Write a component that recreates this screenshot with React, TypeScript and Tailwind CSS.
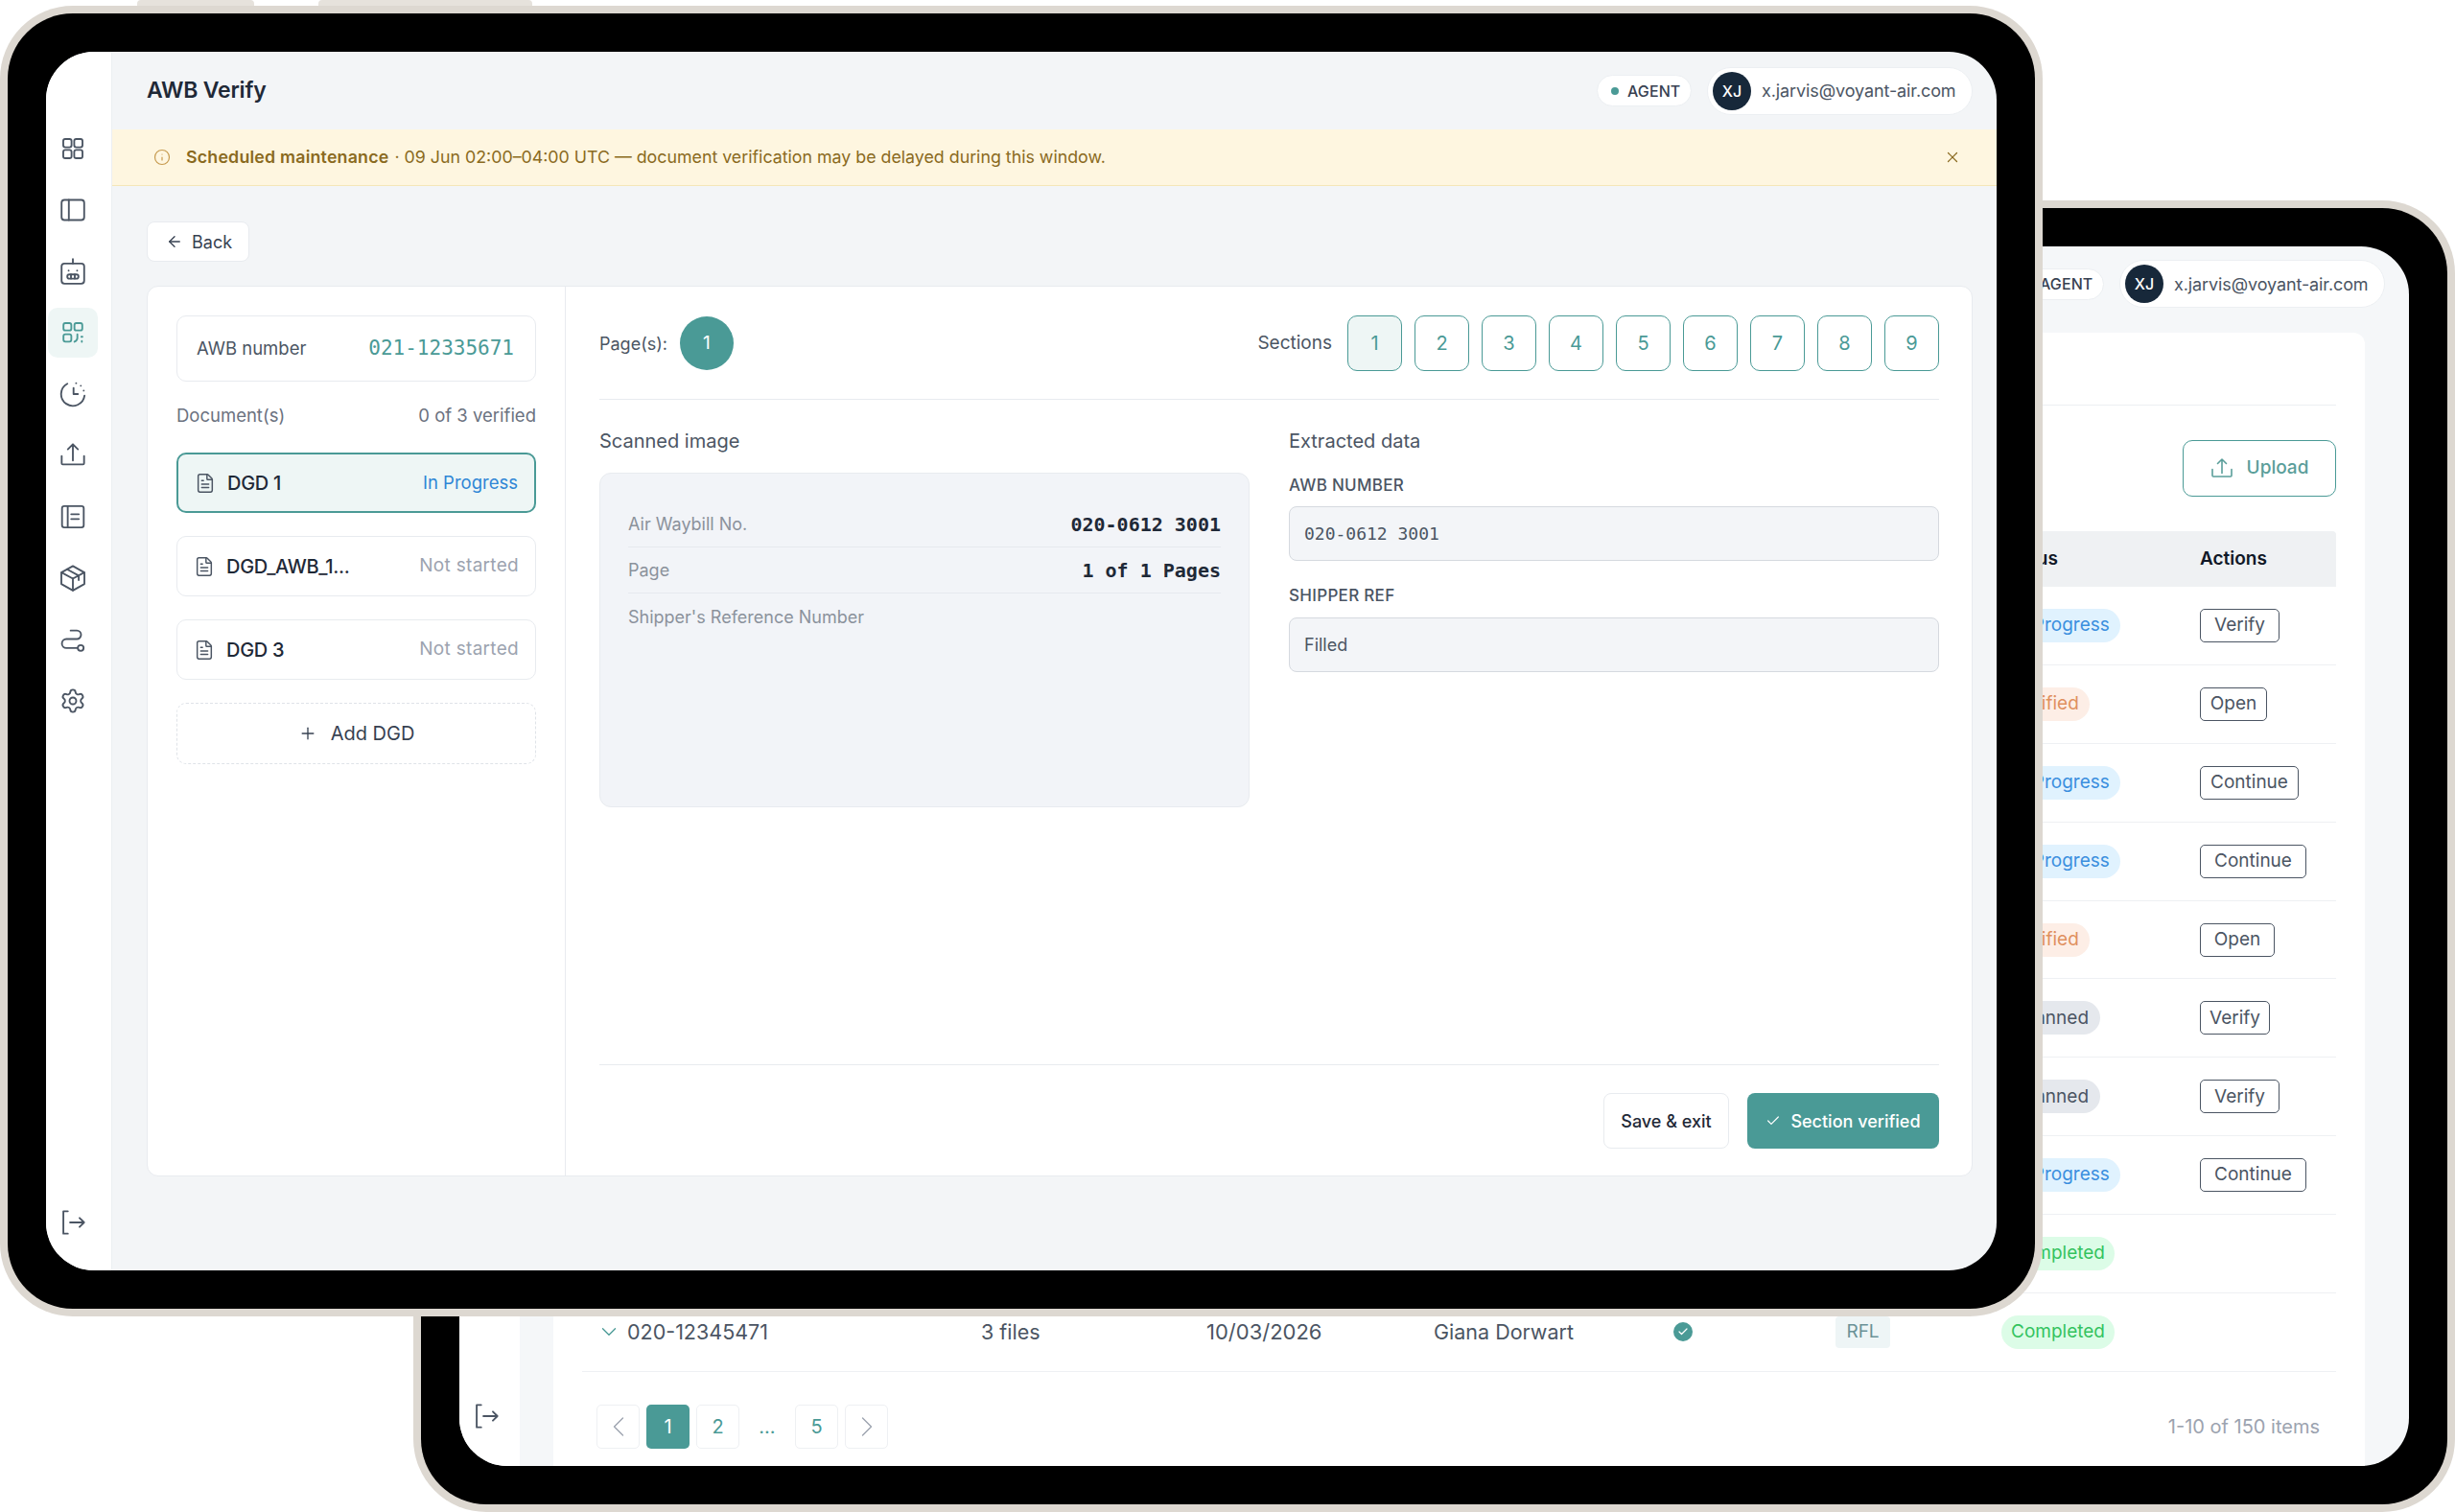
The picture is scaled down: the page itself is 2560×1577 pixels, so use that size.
import type { ReactNode } from 'react'
import { ArrowLeft, Check, ChevronDown, ChevronLeft, ChevronRight, FileText, Info, Plus, Settings, X } from 'lucide-react'

function Glyph({ children, className = 'h-7 w-7' }: { children: ReactNode; className?: string }) {
  return (
    <svg viewBox="0 0 24 24" fill="none" stroke="currentColor" strokeWidth="1.6" strokeLinecap="round" strokeLinejoin="round" className={className}>
      {children}
    </svg>
  )
}

const GridIcon = () => (
  <Glyph>
    <rect x="3.4" y="3.4" width="7.4" height="7.4" rx="1.8" />
    <rect x="13.2" y="3.4" width="7.4" height="7.4" rx="1.8" />
    <rect x="3.4" y="13.2" width="7.4" height="7.4" rx="1.8" />
    <rect x="13.2" y="13.2" width="7.4" height="7.4" rx="1.8" />
  </Glyph>
)
const PanelIcon = () => (
  <Glyph>
    <rect x="1.9" y="3" width="20.2" height="18" rx="2.6" />
    <path d="M8.4 3v18" />
  </Glyph>
)
const BotIcon = () => (
  <Glyph>
    <path d="M12 1v4" />
    <rect x="1.9" y="5" width="20.2" height="18" rx="2.6" />
    <path d="M8.2 11.4h.01M15.8 11.4h.01M10.3 14.8v3.6M13.7 14.8v3.6" />
    <rect x="7" y="14.8" width="10" height="3.7" rx="1.85" />
  </Glyph>
)
const QrIcon = () => (
  <Glyph>
    <rect x="3.6" y="3.4" width="7" height="6.6" rx="1.7" />
    <rect x="13.4" y="3.4" width="7" height="6.6" rx="1.7" />
    <rect x="3.6" y="13.4" width="7" height="6.6" rx="1.7" />
    <path d="M16 13.4v3.4c0 1.6-1 2.7-2.6 3.3M19.6 15.6h.9M20 19.4v.8" />
  </Glyph>
)
const ClockIcon = () => (
  <Glyph>
    <path d="M22.4 13.4A10.5 10.5 0 1 1 7 2.8" />
    <path d="M14.9 2.3h.01M19.1 4.6h.01M21.7 8.9h.01M12.6 6.5V12h3.9" />
  </Glyph>
)
const UploadIcon = ({ className }: { className?: string }) => (
  <Glyph className={className}>
    <path d="M2 12.5V19a1 1 0 0 0 1 1h18a1 1 0 0 0 1-1v-6.500M12 16.500V2M7.500 6.500 12 2l4.500 4.500" />
  </Glyph>
)
const NotebookIcon = () => (
  <Glyph>
    <rect x="2.300" y="2.500" width="19.400" height="19" rx="2" />
    <path d="M7.400 2.500v19M10.500 9.700h6.800M10.500 14h6.800" />
  </Glyph>
)
const BoxIcon = () => (
  <Glyph>
    <path d="M12 1.200 22.300 7v10.200L12 23 1.700 17.200V7z" />
    <path d="M1.900 7 12 12.400 22.100 7M12 12.400V23M6.800 4.100 17.200 9.800v4" />
  </Glyph>
)
const RouteIcon = () => (
  <Glyph>
    <path d="M10 4h5.500a3.800 3.800 0 0 1 0 7.600H6.200a4 4 0 0 0 0 8h10.200" />
    <circle cx="19" cy="19.600" r="2.600" />
  </Glyph>
)
const LogoutIcon = () => (
  <Glyph>
    <path d="M7.500 2H3.500v20h4M9.500 12H22M18 8l4 4-4 4" />
  </Glyph>
)

function Sidebar() {
  const items = [
    <GridIcon key="a" />,
    <PanelIcon key="b" />,
    <BotIcon key="c" />,
    <QrIcon key="d" />,
    <ClockIcon key="e" />,
    <UploadIcon key="f" />,
    <NotebookIcon key="g" />,
    <BoxIcon key="h" />,
    <RouteIcon key="i" />,
    <Settings key="j" className="h-7 w-7" strokeWidth={1.6} />,
  ]
  return (
    <aside className="flex w-[69px] shrink-0 flex-col items-start border-r border-[#eceff2] bg-white pb-[36px] pl-[2px] pt-[75px] text-[#4b5563]">
      {items.map((icon, i) => (
        <div
          key={i}
          className={`mb-[12px] flex h-[52px] w-[52px] items-center justify-center rounded-[10px] ${i === 3 ? 'bg-[#eef6f5] text-[#4a9a96]' : ''}`}
        >
          {icon}
        </div>
      ))}
      <div className="mt-auto pl-[12px]">
        <LogoutIcon />
      </div>
    </aside>
  )
}

function UserPills() {
  return (
    <div className="flex items-center gap-[16px]">
      <div className="flex h-[33px] w-[99px] items-center gap-[9px] rounded-full border border-[#eceff2] bg-white pl-[14px]">
        <span className="h-[8px] w-[8px] rounded-full bg-[#4a9a96]" />
        <span className="text-[16px] font-medium tracking-[0.1px] text-[#374151]">AGENT</span>
      </div>
      <div className="flex h-[50px] w-[277px] items-center gap-[11px] rounded-full border border-[#eceff2] bg-white pl-[5px]">
        <span className="flex h-[40px] w-[40px] items-center justify-center rounded-full bg-[#17283a] text-[16px] font-medium text-white">XJ</span>
        <span className="text-[18px] tracking-[-0.1px] text-[#4b5563]">x.jarvis@voyant-air.com</span>
      </div>
    </div>
  )
}

const docs = [
  { name: 'DGD 1', status: 'In Progress', active: true },
  { name: 'DGD_AWB_1...', status: 'Not started', active: false },
  { name: 'DGD 3', status: 'Not started', active: false },
]

function DocumentPane() {
  return (
    <div className="w-[436px] shrink-0 border-r border-[#e8ebef] p-[30px]">
      <div className="flex h-[69px] items-center justify-between rounded-[10px] border border-[#e8ebef] pl-[20px] pr-[22px]">
        <span className="text-[18.500px] text-[#4b5563]">AWB number</span>
        <span className="font-['DejaVu_Sans_Mono',monospace] text-[21px] text-[#4a9a96]">021-12335671</span>
      </div>
      <div className="mt-[26px] flex h-[20px] items-center justify-between text-[18.500px] text-[#6b7280]">
        <span>Document(s)</span>
        <span>0 of 3 verified</span>
      </div>
      <div className="mt-[28px] flex flex-col gap-[24px]">
        {docs.map((d) => (
          <div
            key={d.name}
            className={`flex h-[63px] items-center rounded-[10px] border pl-[17px] pr-[17px] ${d.active ? 'border-2 border-[#4a9a96] bg-[#eef6f5]' : 'border-[#e8ebef] bg-white'}`}
          >
            <FileText className="h-[22px] w-[22px] text-[#4b5563]" strokeWidth={1.6} />
            <span className="ml-[12px] text-[20px] font-medium tracking-[-0.3px] text-[#1f2937]">{d.name}</span>
            <span className={`ml-auto ${d.active ? 'text-[18.500px] text-[#2f86d6]' : 'text-[19px] tracking-[0.3px] text-[#9ca3af]'}`}>{d.status}</span>
          </div>
        ))}
        <div className="flex h-[64px] items-center justify-center gap-[14px] rounded-[10px] border border-dashed border-[#dfe3e8] text-[20px] text-[#374151]">
          <Plus className="h-[20px] w-[20px]" strokeWidth={1.6} />
          Add DGD
        </div>
      </div>
    </div>
  )
}

function ScanRow({ label, value }: { label: string; value?: string }) {
  return (
    <div className={`flex h-[48px] items-center justify-between ${value ? 'border-b border-[#e6e9ee]' : ''}`}>
      <span className="text-[18px] text-[#8b929c]">{label}</span>
      {value && <span className="font-['DejaVu_Sans_Mono',monospace] text-[20px] font-bold text-[#1f2937]">{value}</span>}
    </div>
  )
}

function VerifyPane() {
  return (
    <div className="flex flex-1 flex-col pb-[28px] pl-[35px] pr-[34px] pt-[30px]">
      <div className="flex items-center justify-between border-b border-[#e8ebef] pb-[29px]">
        <div className="flex items-center gap-[13px]">
          <span className="text-[18px] text-[#4b5563]">Page(s):</span>
          <span className="flex h-[56px] w-[56px] items-center justify-center rounded-full bg-[#4a9a96] text-[19px] text-white">1</span>
        </div>
        <div className="flex items-center gap-[13px]">
          <span className="mr-[3px] text-[19px] text-[#4b5563]">Sections</span>
          {[1, 2, 3, 4, 5, 6, 7, 8, 9].map((n) => (
            <span
              key={n}
              className={`flex h-[58px] w-[57px] items-center justify-center rounded-[10px] border border-[#4a9a96] text-[20px] text-[#4a9a96] ${n === 1 ? 'bg-[#eef6f5]' : ''}`}
            >
              {n}
            </span>
          ))}
        </div>
      </div>
      <div className="mt-[31px] grid grid-cols-2 gap-[41px]">
        <div>
          <h2 className="h-[24px] text-[20px] leading-[24px] text-[#4b5563]">Scanned image</h2>
          <div className="mt-[21px] h-[349px] rounded-[12px] border border-[#e8ebef] bg-[#f2f4f8] px-[29px] pt-[29px]">
            <ScanRow label="Air Waybill No." value="020-0612 3001" />
            <ScanRow label="Page" value="1 of 1 Pages" />
            <ScanRow label="Shipper's Reference Number" />
          </div>
        </div>
        <div>
          <h2 className="h-[24px] text-[20px] leading-[24px] text-[#4b5563]">Extracted data</h2>
          <div className="mt-[24px] h-[20px] text-[17px] font-medium leading-[20px] tracking-[0.3px] text-[#4b5563]">AWB NUMBER</div>
          <div className="mt-[12px] flex h-[57px] items-center rounded-[8px] border border-[#d5d9df] bg-[#f3f5f8] pl-[15px] font-['DejaVu_Sans_Mono',monospace] text-[18px] text-[#4b5563]">
            020-0612 3001
          </div>
          <div className="mt-[26px] h-[20px] text-[17px] font-medium leading-[20px] tracking-[0.3px] text-[#4b5563]">SHIPPER REF</div>
          <div className="mt-[13px] flex h-[57px] items-center rounded-[8px] border border-[#d5d9df] bg-[#f3f5f8] pl-[15px] text-[18px] text-[#4b5563]">
            Filled
          </div>
        </div>
      </div>
      <div className="mt-auto flex justify-end gap-[19px] border-t border-[#e8ebef] pt-[29px]">
        <button className="h-[58px] w-[131px] rounded-[8px] border border-[#e8ebef] bg-white text-[18px] font-medium text-[#1f2937]">Save &amp; exit</button>
        <button className="flex h-[58px] w-[200px] items-center justify-center gap-[10px] rounded-[8px] bg-[#4a9a96] text-[18px] font-medium text-white">
          <Check className="h-[16px] w-[16px]" strokeWidth={1.8} />
          Section verified
        </button>
      </div>
    </div>
  )
}

function FrontApp() {
  return (
    <div className="flex h-full overflow-hidden rounded-[50px] bg-[#f3f5f7]">
      <Sidebar />
      <main className="flex flex-1 flex-col">
        <header className="flex h-[81px] shrink-0 items-center justify-between pl-[36px] pr-[25px]">
          <h1 className="text-[23px] font-semibold tracking-[-0.2px] text-[#1f2937]">AWB Verify</h1>
          <UserPills />
        </header>
        <div className="flex h-[59px] shrink-0 items-center border-b border-[#f5e6b8] bg-[#fef6e0] pl-[43px] pr-[37px] text-[17.800px] text-[#8a6a20]">
          <Info className="h-[18px] w-[18px] text-[#c69a4e]" strokeWidth={1.6} />
          <span className="ml-[16px] font-semibold tracking-[0.2px]">Scheduled maintenance</span>
          <span className="ml-[6px]">· 09 Jun 02:00–04:00 UTC — document verification may be delayed during this window.</span>
          <X className="ml-auto h-[18px] w-[18px]" strokeWidth={1.6} />
        </div>
        <div className="pl-[36px] pr-[25px] pt-[37px]">
          <button className="flex h-[42px] w-[107px] items-center gap-[9px] rounded-[8px] border border-[#e8ebef] bg-white pl-[19px] text-[18px] text-[#374151]">
            <ArrowLeft className="h-[18px] w-[18px]" strokeWidth={1.8} />
            Back
          </button>
          <section className="mt-[25px] flex h-[929px] rounded-[12px] border border-[#e8ebef] bg-white">
            <DocumentPane />
            <VerifyPane />
          </section>
        </div>
      </main>
    </div>
  )
}

const statusStyles = {
  progress: 'w-[124px] bg-[#e0f2fe] text-[#3b8fde]',
  verified: 'w-[92px] bg-[#fdeee6] text-[#e0905f]',
  scanned: 'w-[103px] bg-[#e5e8ed] text-[#4b5563]',
  completed: 'w-[118px] bg-[#dcfce7] text-[#34c35f]',
}
const statusLabel = { progress: 'In Progress', verified: 'Verified', scanned: 'Scanned', completed: 'Completed' }

type Row = { status: keyof typeof statusStyles; action?: string; actionWidth?: string }

const rows: Row[] = [
  { status: 'progress', action: 'Verify', actionWidth: 'w-[83px]' },
  { status: 'verified', action: 'Open', actionWidth: 'w-[70px]' },
  { status: 'progress', action: 'Continue', actionWidth: 'w-[103px]' },
  { status: 'progress', action: 'Continue', actionWidth: 'w-[111px]' },
  { status: 'verified', action: 'Open', actionWidth: 'w-[78px]' },
  { status: 'scanned', action: 'Verify', actionWidth: 'w-[73px]' },
  { status: 'scanned', action: 'Verify', actionWidth: 'w-[83px]' },
  { status: 'progress', action: 'Continue', actionWidth: 'w-[111px]' },
  { status: 'completed' },
  { status: 'completed' },
]

const columns = 'grid grid-cols-[396px_235px_237px_249px_170px_173px_207px_1fr] items-center pl-[20px]'

function BackApp() {
  return (
    <div className="flex h-full overflow-hidden rounded-[50px] bg-[#f5f7f9]">
      <aside className="flex w-[63px] shrink-0 flex-col items-start justify-end bg-white pb-[38px] pl-[14px] text-[#4b5563]">
        <LogoutIcon />
      </aside>
      <main className="flex flex-1 flex-col">
        <header className="flex h-[90px] shrink-0 items-start justify-end pr-[25px] pt-[14px]">
          <UserPills />
        </header>
        <section className="ml-[35px] mr-[46px] flex-1 rounded-t-[12px] bg-white px-[30px] pt-[75px]">
          <div className="border-t border-[#eceff2] pt-[36px]">
            <div className="flex justify-end">
              <button className="flex h-[59px] w-[160px] items-center justify-center gap-[14px] rounded-[10px] border border-[#4a9a96] text-[19px] font-medium text-[#5a9e9a]">
                <UploadIcon className="h-[24px] w-[24px]" />
                Upload
              </button>
            </div>
            <div className={`${columns} mt-[36px] h-[58px] rounded-t-[4px] bg-[#eff1f3] text-[19px] font-semibold text-[#111827]`}>
              <span className="col-start-7">Status</span>
              <span>Actions</span>
            </div>
            {rows.map((row, i) => (
              <div key={i} className={`${columns} h-[81.900px] border-b border-[#eef0f3] text-[21.500px] text-[#4b5563]`}>
                {i === 9 && (
                  <>
                    <span className="-ml-[5px] flex items-center gap-[6px]">
                      <ChevronDown className="h-[26px] w-[26px] text-[#4a9a96]" strokeWidth={1.2} />
                      020-12345471
                    </span>
                    <span>3 files</span>
                    <span className="text-[22px]">10/03/2026</span>
                    <span>Giana Dorwart</span>
                    <span className="ml-[1px] flex h-[20px] w-[20px] items-center justify-center rounded-full bg-[#4a9a96] text-white">
                      <Check className="h-[12px] w-[12px]" strokeWidth={2.4} />
                    </span>
                    <span className="flex h-[33px] w-[57px] items-center justify-center rounded-[4px] bg-[#eef5f6] text-[19px] text-[#6b9297]">RFL</span>
                  </>
                )}
                <span
                  className={`col-start-7 flex h-[35px] items-center justify-center rounded-full text-[19px] ${statusStyles[row.status]}`}
                >
                  {statusLabel[row.status]}
                </span>
                {row.action && (
                  <span className={`flex h-[35px] items-center justify-center rounded-[5px] border border-[#4b5563] text-[19px] text-[#4b5563] ${row.actionWidth}`}>
                    {row.action}
                  </span>
                )}
              </div>
            ))}
            <div className="mt-[34px] flex items-center justify-between pl-[15px] pr-[17px]">
              <div className="flex items-center gap-[7px] text-[20px] text-[#4a9a96]">
                <span className="flex h-[46px] w-[45px] items-center justify-center rounded-[5px] border border-[#eef0f3] text-[#9ca3af]">
                  <ChevronLeft className="h-[36px] w-[36px]" strokeWidth={0.9} />
                </span>
                <span className="flex h-[46px] w-[45px] items-center justify-center rounded-[5px] bg-[#4a9a96] text-white">1</span>
                <span className="flex h-[46px] w-[45px] items-center justify-center rounded-[5px] border border-[#eef0f3]">2</span>
                <span className="flex h-[46px] w-[44px] items-center justify-center">...</span>
                <span className="flex h-[46px] w-[45px] items-center justify-center rounded-[5px] border border-[#eef0f3]">5</span>
                <span className="flex h-[46px] w-[45px] items-center justify-center rounded-[5px] border border-[#eef0f3] text-[#9ca3af]">
                  <ChevronRight className="h-[36px] w-[36px]" strokeWidth={0.9} />
                </span>
              </div>
              <span className="text-[20px] text-[#9ca3af]">1-10 of 150 items</span>
            </div>
          </div>
        </section>
      </main>
    </div>
  )
}

function Tablet({ className, children }: { className: string; children: ReactNode }) {
  return (
    <div className={`absolute rounded-[76px] bg-[#ddd8d1] p-[8px] ${className}`}>
      <div className="h-full rounded-[68px] bg-black p-[40px]">{children}</div>
    </div>
  )
}

export default function App() {
  return (
    <div className="relative h-[1577px] w-[2560px] overflow-hidden bg-white font-['Inter',sans-serif]">
      <div className="absolute left-[143px] top-0 h-[12px] w-[122px] rounded-t-[4px] bg-[#e6e2dc]" />
      <div className="absolute left-[332px] top-0 h-[12px] w-[223px] rounded-t-[4px] bg-[#e6e2dc]" />
      <Tablet className="left-[431px] top-[209px] h-[1368px] w-[2129px]">
        <BackApp />
      </Tablet>
      <Tablet className="left-0 top-[6px] h-[1367px] w-[2130px]">
        <FrontApp />
      </Tablet>
    </div>
  )
}
